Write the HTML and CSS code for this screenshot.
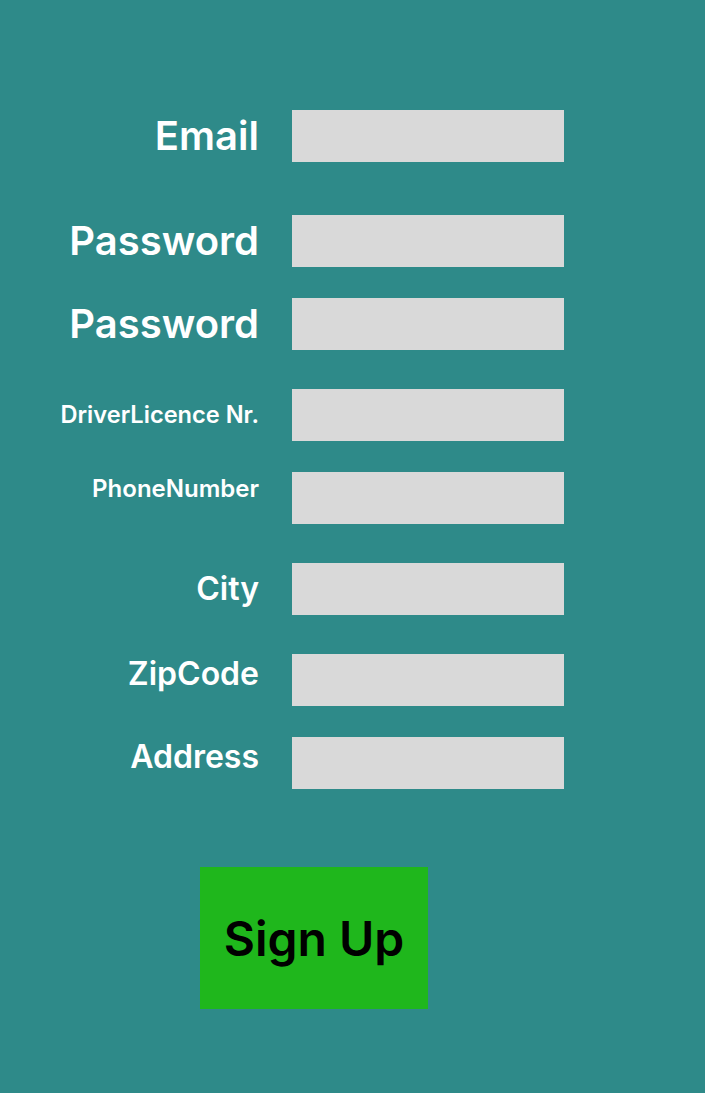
FILE: index.html
```html
<!DOCTYPE html>
<html lang="en">
<head>
<meta charset="utf-8">
<title>Sign Up</title>
<link rel="stylesheet" href="styles.css">
</head>
<body>
<form class="signup">
  <div class="row row-email">
    <label class="label label-xl" for="email">Email</label>
    <input class="field" id="email" type="email">
  </div>
  <div class="row row-pass1">
    <label class="label label-lg" for="pass1">Password</label>
    <input class="field" id="pass1" type="password">
  </div>
  <div class="row row-pass2">
    <label class="label label-lg" for="pass2">Password</label>
    <input class="field" id="pass2" type="password">
  </div>
  <div class="row row-licence">
    <label class="label label-sm" for="licence">DriverLicence Nr.</label>
    <input class="field" id="licence" type="text">
  </div>
  <div class="row row-phone">
    <label class="label label-sm2 label-top" for="phone">PhoneNumber</label>
    <input class="field" id="phone" type="tel">
  </div>
  <div class="row row-city">
    <label class="label label-md" for="city">City</label>
    <input class="field" id="city" type="text">
  </div>
  <div class="row row-zip">
    <label class="label label-md label-up" for="zip">ZipCode</label>
    <input class="field" id="zip" type="text">
  </div>
  <div class="row row-address">
    <label class="label label-md label-up" for="address">Address</label>
    <input class="field" id="address" type="text">
  </div>
  <div class="actions">
    <button class="submit" type="button">Sign Up</button>
  </div>
</form>
</body>
</html>
```

FILE: styles.css
```css
html, body {
  margin: 0;
  padding: 0;
}

body {
  background: #2e8a89;
  font-family: Inter, "Noto Sans", sans-serif;
  min-height: 1093px;
}

.signup {
  display: flex;
  flex-direction: column;
  padding-top: 110px;
}

.row {
  display: flex;
  align-items: center;
  gap: 33px;
}

.row-pass1 { margin-top: 53px; }
.row-pass2 { margin-top: 31px; }
.row-licence { margin-top: 39px; }
.row-phone { margin-top: 31px; }
.row-city { margin-top: 39px; }
.row-zip { margin-top: 39px; }
.row-address { margin-top: 31px; }

.label {
  width: 259px;
  text-align: right;
  color: #ffffff;
  font-weight: 600;
  line-height: 1;
}

.label-xl { font-size: 40px; }
.label-lg { font-size: 40px; }
.label-md { font-size: 32px; }
.label-sm { font-size: 23.6px; }
.label-sm2 { font-size: 24px; }

.label-top { margin-bottom: 18px; }
.label-up { margin-bottom: 13px; }

.field {
  box-sizing: border-box;
  width: 272px;
  height: 52px;
  margin: 0;
  padding: 0 10px;
  border: none;
  border-radius: 0;
  background: #d9d9d9;
  font-family: inherit;
  font-size: 18px;
}

.actions {
  display: flex;
  padding-left: 200px;
  margin-top: 78px;
}

.submit {
  width: 228px;
  height: 142px;
  margin: 0;
  padding: 0;
  border: none;
  border-radius: 0;
  background: #1fb71c;
  color: #000000;
  font-family: inherit;
  font-size: 48px;
  font-weight: 600;
  cursor: pointer;
}
```
